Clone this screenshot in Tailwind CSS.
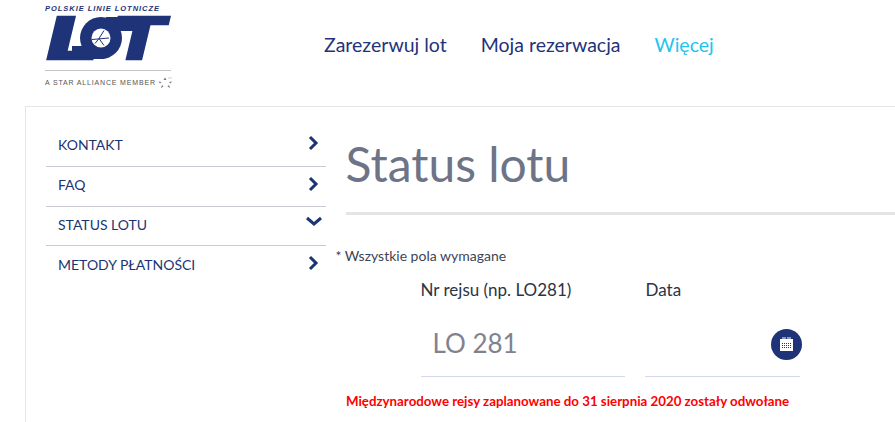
<!DOCTYPE html>
<html lang="pl">
<head>
  <meta charset="UTF-8" />
  <title>Status lotu</title>
  <script src="https://cdn.jsdelivr.net/npm/@tailwindcss/browser@4"></script>
</head>
<body class="bg-white font-['Lato',sans-serif] h-[422px] w-[895px] overflow-hidden">
  <header class="flex h-[106px]">
    <div class="w-[324px] pl-[38px] shrink-0">
      <svg width="140" height="92" viewBox="0 0 140 92" class="block">
        <g transform="translate(6 4)">
          <text x="1" y="7" font-family="Liberation Sans" font-size="7.500" font-weight="700" font-style="italic" textLength="114" lengthAdjust="spacing" fill="#1f3478">POLSKIE LINIE LOTNICZE</text>
          <circle cx="57" cy="34" r="21" fill="#1f3478" />
          <rect x="28" y="42" width="32" height="13" fill="#1f3478" />
          <rect x="62" y="13" width="40" height="14" fill="#1f3478" />
          <text transform="translate(0 55) skewX(-13.500)" x="-3" font-family="Lato" font-weight="900" font-size="58" textLength="52" lengthAdjust="spacingAndGlyphs" fill="#1f3478" stroke="#1f3478" stroke-width="2.500">L</text>
          <text transform="translate(0 55) skewX(-13.500)" x="64" font-family="Lato" font-weight="900" font-size="58" textLength="52" lengthAdjust="spacingAndGlyphs" fill="#1f3478" stroke="#1f3478" stroke-width="2.500">T</text>
          <circle cx="57" cy="34" r="9.500" fill="#fff" />
          <path d="M48 35.500l17-1.500M55 34.500l5-8M55 34.500l5 7M55 34.500l-4 5" stroke="#1f3478" stroke-width="1" fill="none" />
          <rect x="1" y="66" width="126" height="1" fill="#c4c4c4" />
          <text x="1" y="81" font-family="Liberation Sans" font-size="7" textLength="110" lengthAdjust="spacing" fill="#555">A STAR ALLIANCE MEMBER</text>
          <path d="M121 73.500l1.500 2.500-3 0zM114.500 77.500l3 .5-1.500 1.500zM125 78l3-.5-1.500 2zM117 84l1-3 1.500 1.500zM126 84l-1-3-1.500 1.500z" fill="#777" />
          <path d="M124 74h4" stroke="#bbb" stroke-width=".7" />
        </g>
      </svg>
    </div>
    <nav class="flex gap-[34px] pt-[33px] text-[19.500px] leading-[24px] text-[#1f3478]">
      <a>Zarezerwuj lot</a>
      <a>Moja rezerwacja</a>
      <a class="text-[#22c4ee]">Więcej</a>
    </nav>
  </header>

  <div class="ml-[25px] border-l border-t border-[#e6e6e6] flex h-[316px]">
    <aside class="w-[280px] ml-[20px] pt-[19px] shrink-0 text-[14px] text-[#1a3573]">
      <div class="h-[41px] border-b border-[#c8cad8] flex justify-between pl-[12px] pr-[6px] pt-[10px]">
        <span class="leading-[17px]">KONTAKT</span>
        <svg width="12" height="16" viewBox="0 0 12 16" fill="none" stroke="#1a3573" stroke-width="3" class="mt-[-1px]"><path d="M2 2l6 6-6 6" /></svg>
      </div>
      <div class="h-[40px] border-b border-[#c8cad8] flex justify-between pl-[12px] pr-[6px] pt-[9px]">
        <span class="leading-[17px]">FAQ</span>
        <svg width="12" height="16" viewBox="0 0 12 16" fill="none" stroke="#1a3573" stroke-width="3"><path d="M2 2l6 6-6 6" /></svg>
      </div>
      <div class="h-[39px] border-b border-[#c8cad8] flex justify-between pl-[12px] pr-[4px] pt-[9px]">
        <span class="leading-[17px]">STATUS LOTU</span>
        <svg width="16" height="12" viewBox="0 0 16 12" fill="none" stroke="#1a3573" stroke-width="3"><path d="M1 2l7 6 7-6" /></svg>
      </div>
      <div class="h-[40px] flex justify-between pl-[12px] pr-[6px] pt-[10px]">
        <span class="leading-[17px]">METODY PŁATNOŚCI</span>
        <svg width="12" height="16" viewBox="0 0 12 16" fill="none" stroke="#1a3573" stroke-width="3" class="mt-[-1px]"><path d="M2 2l6 6-6 6" /></svg>
      </div>
    </aside>

    <main class="flex-1 min-w-0 pl-[19.500px]">
      <h1 class="text-[48px] leading-[60px] text-[#6e7488] mt-[27px] h-[81px] border-b-[3px] border-[#e5e5e5]">Status lotu</h1>
      <p class="text-[14px] leading-[17px] text-[#3c4458] mt-[32px] ml-[-10px]">* Wszystkie pola wymagane</p>
      <div class="flex mt-[16px] text-[#2c3444] text-[17px] leading-[20px]">
        <div class="w-[204px] ml-[75px] mr-[20px] shrink-0">
          <label class="block">Nr rejsu (np. LO281)</label>
          <div class="h-[77px] border-b border-[#d3d9e8] pt-[28px] pl-[12px] text-[26px] leading-[30px] text-[#7e838f]">LO 281</div>
        </div>
        <div class="w-[155px] shrink-0">
          <label class="block pl-[1px]">Data</label>
          <div class="h-[77px] border-b border-[#d3d9e8] relative">
            <span class="absolute left-[126px] top-[29px] w-[31px] h-[31px] rounded-full bg-[#1f3478] flex items-center justify-center">
              <svg width="15" height="16" viewBox="0 0 15 16" class="mt-[-2px]"><rect x="1" y="3" width="13" height="12" fill="#fff" /><path d="M4 1v2M6 1v2M9 1v2M11 1v2" stroke="#fff" stroke-width="1" /><path d="M3 7.500h9M3 9.500h9M3 11.500h9" stroke="#1f3478" stroke-width="1" stroke-dasharray="1 1" /></svg>
            </span>
          </div>
        </div>
      </div>
      <p class="mt-[16px] ml-[0.5px] text-[13.300px] leading-[16px] font-bold text-[#ff0000]">Międzynarodowe rejsy zaplanowane do 31 sierpnia 2020 zostały odwołane</p>
    </main>
  </div>
</body>
</html>
